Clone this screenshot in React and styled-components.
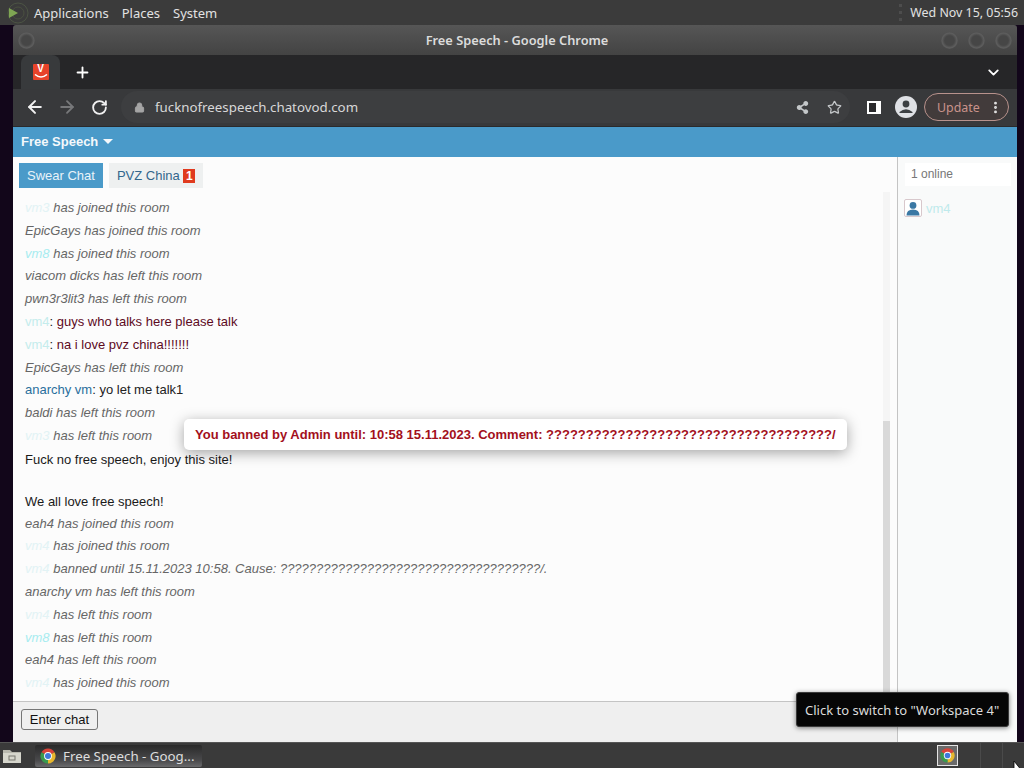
import styled, { createGlobalStyle } from "styled-components";
import { ArrowLeft, ArrowRight, RotateCw, Lock, Star, ChevronDown, Plus, EllipsisVertical } from "lucide-react";
import { FaShareAlt } from "react-icons/fa";

const messages = [
    { who: "vm3", faint: 1, text: "has joined this room" },
    { who: "EpicGays", text: "has joined this room" },
    { who: "vm8", faint: 3, text: "has joined this room" },
    { who: "viacom dicks", text: "has left this room" },
    { who: "pwn3r3lit3", text: "has left this room" },
    { who: "vm4", faint: 2, say: "guys who talks here please talk", tone: "#5c0a1e" },
    { who: "vm4", faint: 2, say: "na i love pvz china!!!!!!!", tone: "#5c0a1e" },
    { who: "EpicGays", text: "has left this room" },
    { who: "anarchy vm", blue: true, say: "yo let me talk1", tone: "#222" },
    { who: "baldi", text: "has left this room" },
    { who: "vm3", faint: 1, text: "has left this room" },
    { lines: ["Fuck no free speech, enjoy this site!", "\u00a0", "We all love free speech!"] },
    { who: "eah4", text: "has joined this room" },
    { who: "vm4", faint: 1, text: "has joined this room" },
    { who: "vm4", faint: 1, text: "banned until 15.11.2023 10:58. Cause: ????????????????????????????????????/." },
    { who: "anarchy vm", text: "has left this room" },
    { who: "vm4", faint: 1, text: "has left this room" },
    { who: "vm8", faint: 3, text: "has left this room" },
    { who: "eah4", text: "has left this room" },
    { who: "vm4", faint: 1, text: "has joined this room" },
];

const faintColors = { 1: "#e2f3f5", 2: "#c4ecec", 3: "#a8ecf0" };

const ChromeIcon = ({ size }) => (
    <svg width={size} height={size} viewBox="0 0 24 24">
        <path d="M12 12 L3.3 7 A10 10 0 0 1 20.7 7 Z" fill="#d8443a" />
        <path d="M12 12 L20.7 7 A10 10 0 0 1 12 22 Z" fill="#e8b82e" />
        <path d="M12 12 L12 22 A10 10 0 0 1 3.3 7 Z" fill="#3a9a4e" />
        <circle cx="12" cy="12" r="5.2" fill="#fff" />
        <circle cx="12" cy="12" r="4" fill="#3f78d8" />
    </svg>
);

const App = () => {
    return (
        <Desktop>
            <GlobalStyle />
            <TopPanel>
                <MenuLogo>
                    <svg width="24" height="24" viewBox="0 0 24 24">
                        <circle cx="13" cy="12" r="10" fill="none" stroke="#4c5444" strokeWidth="1" />
                        <circle cx="13" cy="12" r="6" fill="none" stroke="#4a5040" strokeWidth="1" />
                        <path d="M4 7 L13 12 L4 17 Z" fill="#7fa653" />
                    </svg>
                </MenuLogo>
                <MenuItem>Applications</MenuItem>
                <MenuItem>Places</MenuItem>
                <MenuItem>System</MenuItem>
                <Clock>Wed Nov 15, 05:56</Clock>
            </TopPanel>

            <WindowArea>
                <Window>
                    <TitleBar>
                        <WinButton />
                        <Title>Free Speech - Google Chrome</Title>
                        <WinButtons>
                            <WinButton />
                            <WinButton />
                            <WinButton />
                        </WinButtons>
                    </TitleBar>

                    <TabStrip>
                        <Tab>
                            <Favicon>
                                <FaviconLetter>V</FaviconLetter>
                                <svg width="16" height="5" viewBox="0 0 16 5">
                                    <path d="M2 0.5 Q8 5.5 14 0.5" fill="none" stroke="#fff" strokeWidth="1.6" />
                                </svg>
                            </Favicon>
                        </Tab>
                        <NewTab><Plus size={17} strokeWidth={2.6} /></NewTab>
                        <TabMenu><ChevronDown size={17} strokeWidth={2.6} /></TabMenu>
                    </TabStrip>

                    <Toolbar>
                        <NavButton><ArrowLeft size={20} strokeWidth={2.4} /></NavButton>
                        <NavButton $off><ArrowRight size={20} strokeWidth={2.2} /></NavButton>
                        <NavButton><RotateCw size={17} strokeWidth={2.6} /></NavButton>
                        <Omnibox>
                            <Lock size={11} color="#a5a5a5" fill="#a5a5a5" strokeWidth={2} />
                            <Url>fucknofreespeech.chatovod.com</Url>
                            <OmniIcons>
                                <FaShareAlt size={13} color="#c4c7c9" />
                                <Star size={15} color="#c4c7c9" strokeWidth={2} />
                            </OmniIcons>
                        </Omnibox>
                        <SidePanelIcon />
                        <Avatar>
                            <svg width="22" height="22" viewBox="0 0 22 22">
                                <circle cx="11" cy="11" r="11" fill="#dfe1e5" />
                                <circle cx="11" cy="8" r="3.4" fill="#3c4043" />
                                <path d="M4.5 16 Q11 10.5 17.5 16 L17.5 17 L4.5 17 Z" fill="#3c4043" />
                            </svg>
                        </Avatar>
                        <UpdatePill>
                            <span>Update</span>
                            <EllipsisVertical size={15} color="#e3e3e3" strokeWidth={2.6} />
                        </UpdatePill>
                    </Toolbar>

                    <Page>
                        <RoomBar>
                            <RoomName>Free Speech</RoomName>
                            <Caret />
                        </RoomBar>
                        <Columns>
                            <ChatColumn>
                                <Tabs>
                                    <RoomTab $active>Swear Chat</RoomTab>
                                    <RoomTab>PVZ China <Badge>1</Badge></RoomTab>
                                </Tabs>
                                <ChatBody>
                                    <Log>
                                        {messages.map((m, i) => m.lines ? (
                                            <Announcement key={i}>
                                                {m.lines.map((line, n) => <div key={n}>{line}</div>)}
                                            </Announcement>
                                        ) : (
                                            <Row key={i} $notice={!!m.text}>
                                                <Nick $faint={m.faint} $blue={m.blue}>{m.who}</Nick>
                                                {m.text && <> {m.text}</>}
                                                {m.say && <>: <Said $tone={m.tone}>{m.say}</Said></>}
                                            </Row>
                                        ))}
                                    </Log>
                                    <ScrollTrack>
                                        <ScrollThumb />
                                    </ScrollTrack>
                                </ChatBody>
                                <Footer>
                                    <EnterButton>Enter chat</EnterButton>
                                </Footer>
                            </ChatColumn>

                            <UsersColumn>
                                <OnlineBox>1 online</OnlineBox>
                                <UserRow>
                                    <UserIcon>
                                        <svg width="14" height="15" viewBox="0 0 14 15">
                                            <circle cx="7" cy="4.4" r="3.4" fill="#3a78a4" />
                                            <path d="M0.5 14.5 Q0.5 8.5 7 8.5 Q13.5 8.5 13.5 14.5 Z" fill="#3a78a4" />
                                        </svg>
                                    </UserIcon>
                                    <UserName>vm4</UserName>
                                </UserRow>
                            </UsersColumn>
                        </Columns>
                    </Page>
                </Window>
            </WindowArea>

            <Taskbar>
                <ShowDesktop>
                    <svg width="20" height="17" viewBox="0 0 20 17">
                        <path d="M1 3 L8 3 L10 5 L19 5 L19 16 L1 16 Z" fill="#b8b8ae" />
                        <rect x="1" y="6" width="18" height="10" fill="#d6d6cc" />
                        <rect x="7" y="9" width="6" height="4" fill="none" stroke="#77776f" />
                    </svg>
                </ShowDesktop>
                <TaskButton>
                    <ChromeIcon size={18} />
                    <TaskLabel>Free Speech - Goog...</TaskLabel>
                </TaskButton>
                <Tray>
                    <TrayChrome><ChromeIcon size={17} /></TrayChrome>
                    <TrayCell />
                    <TrayCell />
                </Tray>
            </Taskbar>

            <Toast>You banned by Admin until: 10:58 15.11.2023. Comment: ????????????????????????????????????/</Toast>
            <Tooltip>Click to switch to "Workspace 4"</Tooltip>
            <Cursor>
                <svg width="10" height="14" viewBox="0 0 10 14">
                    <path d="M1 0 L1 13 L4 10 L9 10 Z" fill="#fff" stroke="#000" strokeWidth="0.8" />
                </svg>
            </Cursor>
        </Desktop>
    );
}

const GlobalStyle = createGlobalStyle`
    html, body {
        margin: 0;
        padding: 0;
        width: 1024px;
        height: 768px;
        overflow: hidden;
    }
    * {
        box-sizing: border-box;
    }
`

const Desktop = styled.div`
    position: relative;
    display: flex;
    flex-direction: column;
    width: 1024px;
    height: 768px;
    overflow: hidden;
    background: #12061a;
    font-family: "Liberation Sans", Arial, sans-serif;
`

const TopPanel = styled.header`
    display: flex;
    align-items: center;
    height: 25px;
    flex: none;
    padding: 0 6px 0 5px;
    background: #3b3b3b;
    font-family: "Noto Sans", sans-serif;
    font-size: 13px;
    color: #e2e2e2;
`

const MenuLogo = styled.div`
    display: flex;
    width: 29px;
    flex: none;
`

const MenuItem = styled.span`
    margin-right: 13px;
`

const Clock = styled.span`
    margin-left: auto;
    padding-left: 8px;
    font-size: 12.4px;
    border-left: 3px dotted #4d4d4d;
`

const WindowArea = styled.div`
    flex: 1;
    display: flex;
    min-height: 0;
    padding: 0 7px 0 13px;
`

const Window = styled.main`
    flex: 1;
    display: flex;
    flex-direction: column;
    min-width: 0;
`

const TitleBar = styled.div`
    display: flex;
    align-items: center;
    justify-content: space-between;
    position: relative;
    height: 30px;
    flex: none;
    padding: 0 5px;
    background: linear-gradient(#565656, #434343);
    border-radius: 3px 3px 0 0;
`

const Title = styled.div`
    flex: 1;
    text-align: center;
    padding-left: 58px;
    font-family: "Noto Sans", sans-serif;
    font-size: 12.8px;
    font-weight: 600;
    color: #dcdcdc;
`

const WinButtons = styled.div`
    display: flex;
    gap: 10px;
`

const WinButton = styled.span`
    display: block;
    width: 17px;
    height: 17px;
    border-radius: 50%;
    background: radial-gradient(circle, #464646 40%, #5e5e5e 62%, #3c3c3c 85%);
`

const TabStrip = styled.div`
    display: flex;
    align-items: center;
    height: 34px;
    flex: none;
    padding-left: 8px;
    background: #262628;
`

const Tab = styled.div`
    display: flex;
    align-items: center;
    justify-content: center;
    width: 39px;
    height: 34px;
    background: #383a3c;
    border-radius: 8px 8px 0 0;
`

const Favicon = styled.div`
    display: flex;
    flex-direction: column;
    align-items: center;
    width: 16px;
    height: 16px;
    background: #e8432a;
    border-radius: 1px;
    overflow: hidden;
`

const FaviconLetter = styled.span`
    font-size: 10px;
    line-height: 10px;
    font-weight: 700;
    color: #fff;
`

const NewTab = styled.div`
    display: flex;
    margin-left: 14px;
    color: #fff;
`

const TabMenu = styled.div`
    display: flex;
    margin-left: auto;
    margin-right: 15px;
    color: #fff;
`

const Toolbar = styled.div`
    display: flex;
    align-items: center;
    height: 38px;
    flex: none;
    padding: 0 8px 1px 12px;
    background: #38393b;
    border-bottom: 1px solid #2a2a2c;
`

const NavButton = styled.div`
    display: flex;
    justify-content: center;
    width: 20px;
    margin-right: 12px;
    color: ${props => props.$off ? "#77787a" : "#f1f1f1"};
`

const Omnibox = styled.div`
    flex: 1;
    display: flex;
    align-items: center;
    height: 32px;
    padding: 0 8px 0 13px;
    background: #3d3e40;
    border-radius: 16px;
`

const Url = styled.span`
    margin-left: 10px;
    font-family: "Noto Sans", sans-serif;
    font-size: 13.3px;
    color: #d8d8d8;
`

const OmniIcons = styled.div`
    display: flex;
    align-items: center;
    gap: 18px;
    margin-left: auto;
`

const SidePanelIcon = styled.div`
    width: 14px;
    height: 13px;
    margin-left: 17px;
    background: #fff;
    border: solid #fff;
    border-width: 2px 5px 2px 2px;
    box-shadow: inset 0 0 0 20px #2a2a2c;
`

const Avatar = styled.div`
    display: flex;
    margin-left: 14px;
`

const UpdatePill = styled.div`
    display: flex;
    align-items: center;
    justify-content: space-between;
    width: 85px;
    height: 28px;
    margin-left: 7px;
    padding: 0 5px 0 12px;
    border: 1px solid #b8928c;
    border-radius: 14px;
    background: #423b3b;
    font-family: "Noto Sans", sans-serif;
    font-size: 12.4px;
    color: #c9938b;
`

const Page = styled.div`
    flex: 1;
    display: flex;
    flex-direction: column;
    min-height: 0;
    background: #fcfcfc;
`

const RoomBar = styled.div`
    display: flex;
    align-items: center;
    height: 30px;
    flex: none;
    padding: 0 0 2px 8px;
    background: #4a9ac9;
`

const RoomName = styled.span`
    font-size: 13px;
    font-weight: 700;
    color: #f4f8fb;
`

const Caret = styled.span`
    width: 0;
    height: 0;
    margin-left: 5px;
    border: 5px solid transparent;
    border-top-color: #f4f8fb;
    border-bottom-width: 0;
`

const Columns = styled.div`
    flex: 1;
    display: flex;
    min-height: 0;
`

const ChatColumn = styled.section`
    width: 885px;
    flex: none;
    display: flex;
    flex-direction: column;
    border-right: 1px solid #c4c4c4;
`

const Tabs = styled.div`
    display: flex;
    gap: 6px;
    height: 35px;
    flex: none;
    padding: 6px 0 0 6px;
`

const RoomTab = styled.div`
    height: 25px;
    padding: 0 8px;
    font-size: 13px;
    line-height: 25px;
    background: ${props => props.$active ? "#4a9ac9" : "#eef0f0"};
    color: ${props => props.$active ? "#e8f3f9" : "#33668c"};
`

const Badge = styled.span`
    display: inline-block;
    width: 12px;
    height: 14px;
    background: #e03a1e;
    color: #fff;
    font-size: 12px;
    font-weight: 700;
    line-height: 14px;
    text-align: center;
`

const ChatBody = styled.div`
    flex: 1;
    display: flex;
    min-height: 0;
`

const Log = styled.div`
    flex: 1;
    min-width: 0;
    padding: 5px 0 0 12px;
    overflow: hidden;
`

const Row = styled.div`
    height: 22.8px;
    font-size: 13px;
    line-height: 22.8px;
    white-space: nowrap;
    font-style: ${props => props.$notice ? "italic" : "normal"};
    color: ${props => props.$notice ? "#666" : "#1a1a1a"};
`

const Announcement = styled.div`
    padding: 0.9px 0;
    font-size: 13px;
    line-height: 21px;
    color: #1a1a1a;
`

const Nick = styled.span`
    color: ${props => props.$faint ? faintColors[props.$faint] : props.$blue ? "#2a6f9c" : "inherit"};
`

const Said = styled.span`
    color: ${props => props.$tone};
`

const ScrollTrack = styled.div`
    display: flex;
    flex-direction: column;
    justify-content: flex-end;
    width: 7px;
    flex: none;
    margin: 0 7px 8px 0;
    background: #f5f5f5;
`

const ScrollThumb = styled.div`
    height: 272px;
    background: #d9d9d9;
`

const Footer = styled.div`
    display: flex;
    align-items: flex-start;
    height: 41px;
    flex: none;
    padding: 7px 0 0 8px;
    background: #efefef;
    border-top: 1px solid #c4c4c4;
`

const EnterButton = styled.button`
    width: 77px;
    height: 21px;
    padding: 0;
    font-family: "Liberation Sans", Arial, sans-serif;
    font-size: 13px;
    color: #111;
    background: #efefef;
    border: 1px solid #767676;
    border-radius: 3px;
`

const UsersColumn = styled.aside`
    flex: 1;
    padding: 6px 6px 0 7px;
    background: #f9fafa;
`

const OnlineBox = styled.div`
    height: 23px;
    padding-left: 6px;
    font-size: 12px;
    line-height: 23px;
    color: #777;
    background: #fff;
`

const UserRow = styled.div`
    display: flex;
    align-items: center;
    gap: 4px;
    margin: 13px 0 0 -1px;
`

const UserIcon = styled.div`
    display: flex;
    align-items: flex-end;
    justify-content: center;
    width: 18px;
    height: 18px;
    border: 1px solid #d8c8cc;
    border-radius: 2px;
    background: #fff;
`

const UserName = styled.span`
    font-size: 13px;
    color: #bfeaec;
`

const Taskbar = styled.footer`
    display: flex;
    align-items: center;
    height: 26px;
    flex: none;
    background: #3a3a3a;
    border-top: 1px solid #555;
`

const ShowDesktop = styled.div`
    display: flex;
    width: 35px;
    padding-left: 2px;
    flex: none;
`

const TaskButton = styled.div`
    display: flex;
    align-items: center;
    gap: 6px;
    width: 167px;
    height: 22px;
    padding-left: 4px;
    background: linear-gradient(#2a2a2a, #4a4a4c 70%, #6a6a6c);
    border-radius: 2px;
`

const TaskLabel = styled.span`
    font-family: "Noto Sans", sans-serif;
    font-size: 13.3px;
    color: #dedede;
    white-space: nowrap;
`

const Tray = styled.div`
    display: flex;
    align-items: center;
    height: 100%;
    margin-left: auto;
`

const TrayChrome = styled.div`
    display: flex;
    align-items: center;
    justify-content: center;
    width: 21px;
    height: 21px;
    margin-right: 22px;
    background: #6a6a6a;
    border: 1px solid #e4e4e4;
`

const TrayCell = styled.div`
    width: 22px;
    height: 100%;
    border-left: 1px solid #4a4a4a;
`

const Toast = styled.div`
    position: absolute;
    left: 184px;
    top: 419px;
    width: 663px;
    height: 31px;
    padding-left: 11px;
    font-size: 13px;
    font-weight: 700;
    line-height: 31px;
    white-space: nowrap;
    color: #a3101c;
    background: #fff;
    border-radius: 5px;
    box-shadow: 0 3px 14px rgba(0, 0, 0, 0.35);
`

const Tooltip = styled.div`
    position: absolute;
    left: 796px;
    top: 692px;
    width: 213px;
    height: 35px;
    padding-left: 8px;
    font-family: "Noto Sans", sans-serif;
    font-size: 13px;
    line-height: 35px;
    white-space: nowrap;
    color: #dcdcdc;
    background: #060606;
    border: 1px solid #3a3a3a;
    border-radius: 3px;
    box-shadow: 0 1px 5px rgba(0, 0, 0, 0.5);
`

const Cursor = styled.div`
    position: absolute;
    left: 1013px;
    top: 761px;
    display: flex;
`

export default App;
